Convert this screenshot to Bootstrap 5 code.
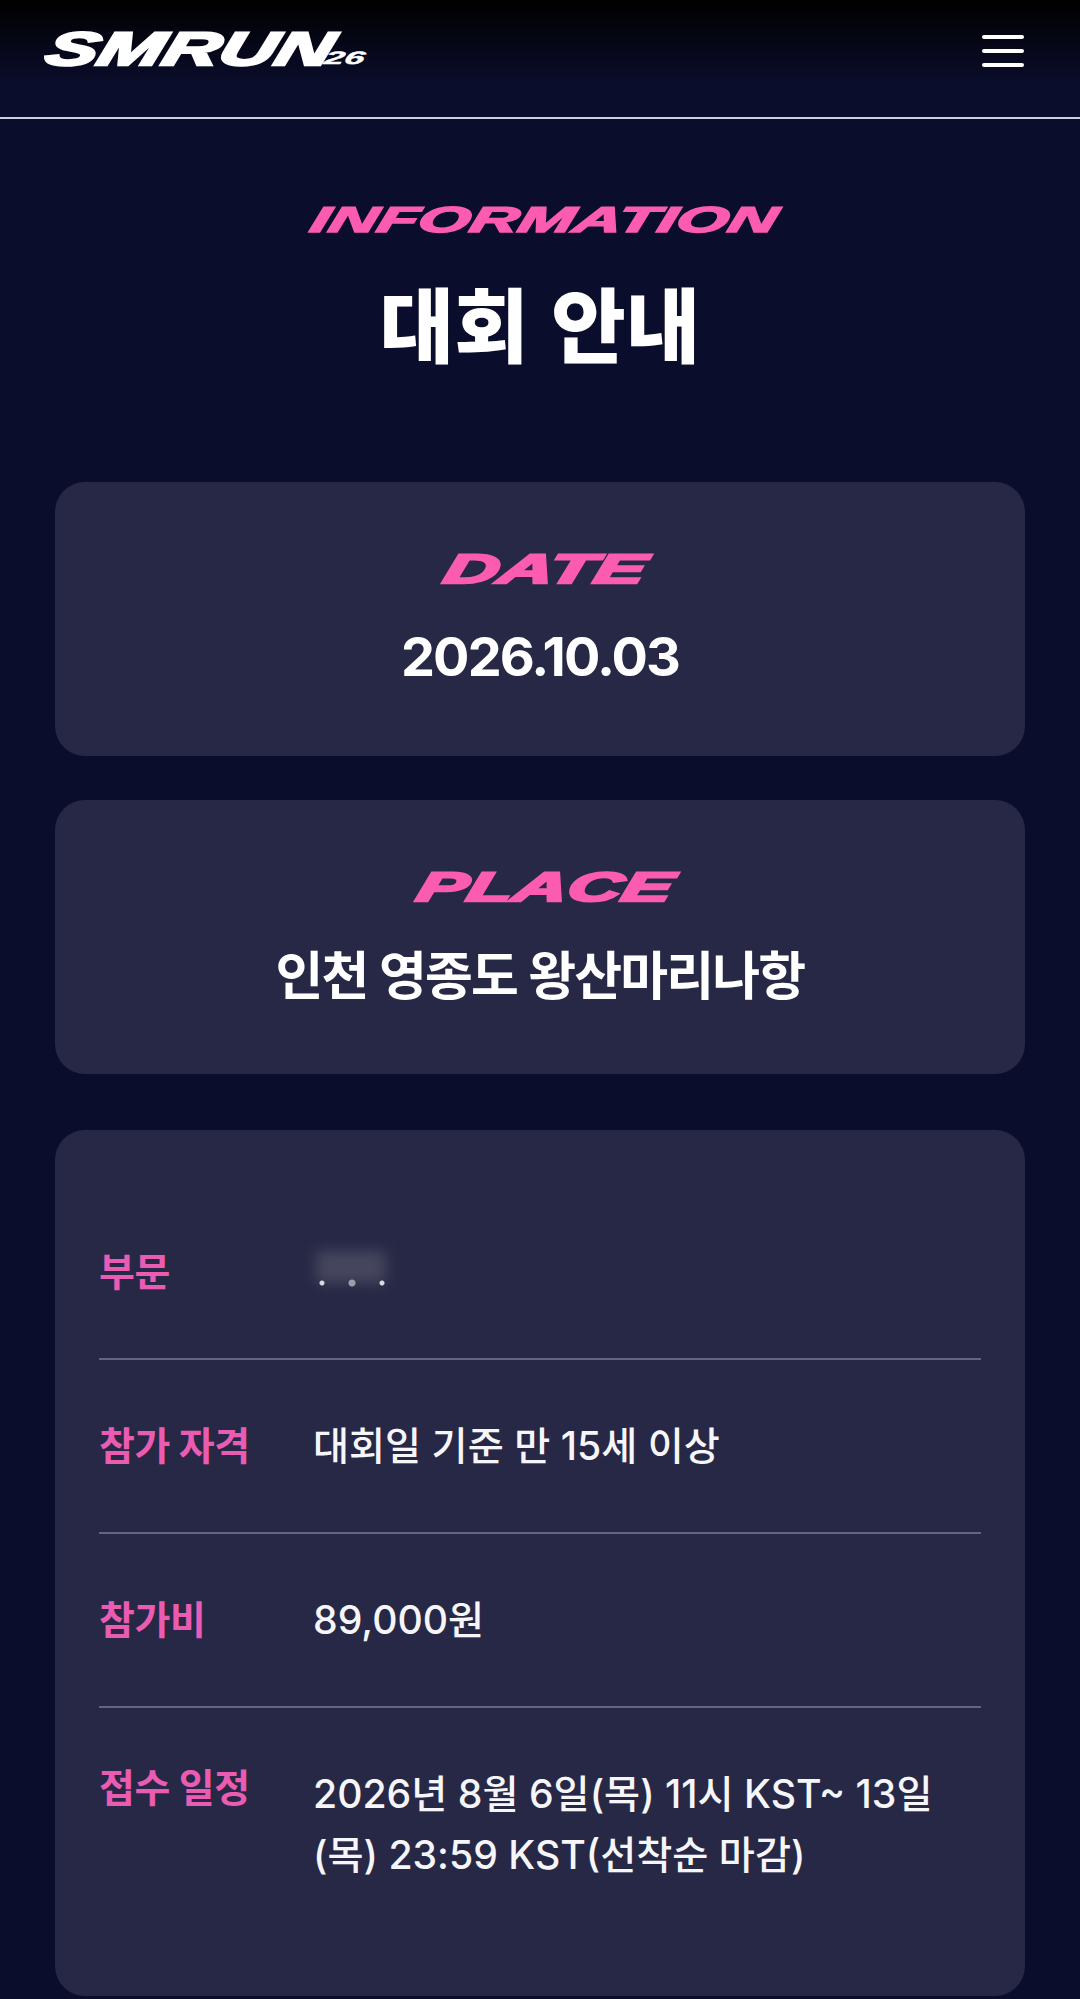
<!DOCTYPE html>
<html lang="ko">
<head>
    <meta charset="UTF-8">
    <title>대회 안내</title>
    <link href="https://cdn.jsdelivr.net/npm/bootstrap@5.3.3/dist/css/bootstrap.min.css" rel="stylesheet">
    <style>
        body { background: #0b0d2c; color: #fff; font-family: Inter, "Noto Sans CJK KR", sans-serif; }
        .site-head { height: 119px; padding: 0 56px 0 43px; background: linear-gradient(#000, #0b0d2c 85px); border-bottom: 2px solid #cfcfdc; align-items: flex-start; }
        .brand-mark { display: block; margin-top: 29px; overflow: visible; }
        .brand-mark text { font-family: "Liberation Sans", sans-serif; font-weight: 700; font-style: italic; fill: #fff; stroke: #fff; }
        .burger { width: 42px; margin-top: 35px; gap: 10px; }
        .burger span { display: block; height: 4px; border-radius: 2px; background: #fff; }
        .wordmark { display: block; overflow: visible; }
        .wordmark text { font-family: "Liberation Sans", sans-serif; font-weight: 700; font-style: italic; fill: #fb5cb0; stroke: #fb5cb0; }
        .intro { padding-top: 86px; }
        .intro-title { font-family: "Noto Sans CJK KR", sans-serif; font-size: 81px; font-weight: 900; line-height: 116px; margin: 31px 0 0; }
        .info-wrap { padding: 0 55px; margin-top: 103px; }
        .info-card { background: #262845; border: 0; border-radius: 30px; color: #fff; }
        .info-card + .info-card { margin-top: 44px; }
        .info-card.detail-card { margin-top: 56px; padding: 56px 44px 56px; }
        .brief-body { padding: 71px 0 64px; }
        .brief-value { font-size: 54px; font-weight: 700; line-height: 70px; letter-spacing: -0.035em; margin-top: 38px; }
        .brief-value.place-name { font-size: 52px; font-weight: 600; margin: 40px 0 -2px; }
        .detail-row { padding: 55px 0; border-bottom: 2px solid #63657f; }
        .detail-row:last-child { border-bottom: 0; }
        .detail-label { width: 215px; flex: none; color: #ea5cb2; font-size: 39px; font-weight: 700; line-height: 62px; letter-spacing: -0.01em; }
        .detail-label.raised { margin-top: -6px; }
        .detail-value { font-size: 39.2px; font-weight: 500; line-height: 61px; color: #f6f6fa; margin-left: -1px; }
        .smudge { position: relative; display: block; width: 74px; height: 36px; margin-top: 10px; }
        .smudge::before { content: ""; position: absolute; inset: 0 2px 4px; background: #46475e; filter: blur(7px); }
        .smudge::after { content: ""; position: absolute; left: 0; right: 0; bottom: 0; height: 8px; filter: blur(0.6px);
            background: radial-gradient(circle, #d8d8e0 2px, transparent 3px) 4px 0 / 8px 8px no-repeat,
                        radial-gradient(circle, #9c9cab 3px, transparent 4px) 32px 0 / 12px 8px no-repeat,
                        radial-gradient(circle, #d8d8e0 2px, transparent 3px) 64px 0 / 8px 8px no-repeat; }
    </style>
</head>
<body>
<header class="site-head d-flex justify-content-between">
    <svg class="brand-mark" width="322" height="36" viewBox="0 0 322 36">
        <text x="0" y="36" font-size="47" stroke-width="2.5" textLength="286" lengthAdjust="spacingAndGlyphs" transform="translate(10 0) skewX(-16)">SMRUN</text>
        <text x="280" y="35" font-size="18" stroke-width="0.4" textLength="40" lengthAdjust="spacingAndGlyphs" transform="translate(10 0) skewX(-16)">26</text>
    </svg>
    <div class="burger d-flex flex-column"><span></span><span></span><span></span></div>
</header>

<section class="intro d-flex flex-column align-items-center">
    <svg class="wordmark" width="473" height="27" viewBox="0 0 473 27">
        <text x="0" y="27" font-size="36" stroke-width="1.6" textLength="466" lengthAdjust="spacingAndGlyphs" transform="translate(11 0) skewX(-14)">INFORMATION</text>
    </svg>
    <h1 class="intro-title">대회 안내</h1>
</section>

<main class="info-wrap">
    <div class="card info-card">
        <div class="brief-body d-flex flex-column align-items-center">
            <svg class="wordmark" width="209" height="31" viewBox="0 0 209 31">
                <text x="0" y="30" font-size="41" stroke-width="2.4" textLength="201" lengthAdjust="spacingAndGlyphs" transform="translate(13 0) skewX(-14)">DATE</text>
            </svg>
            <div class="brief-value">2026.10.03</div>
        </div>
    </div>
    <div class="card info-card">
        <div class="brief-body d-flex flex-column align-items-center">
            <svg class="wordmark" width="263" height="31" viewBox="0 0 263 31">
                <text x="0" y="30" font-size="41" stroke-width="2.4" textLength="255" lengthAdjust="spacingAndGlyphs" transform="translate(13 0) skewX(-14)">PLACE</text>
            </svg>
            <div class="brief-value place-name">인천 영종도 왕산마리나항</div>
        </div>
    </div>
    <div class="card info-card detail-card">
        <div class="detail-row d-flex">
            <div class="detail-label">부문</div>
            <span class="smudge"></span>
        </div>
        <div class="detail-row d-flex">
            <div class="detail-label">참가 자격</div>
            <div class="detail-value">대회일 기준 만 15세 이상</div>
        </div>
        <div class="detail-row d-flex">
            <div class="detail-label">참가비</div>
            <div class="detail-value">89,000원</div>
        </div>
        <div class="detail-row d-flex">
            <div class="detail-label raised">접수 일정</div>
            <div class="detail-value">2026년 8월 6일(목) 11시 KST~ 13일(목) 23:59 KST(선착순 마감)</div>
        </div>
    </div>
</main>
<script src="https://cdn.jsdelivr.net/npm/bootstrap@5.3.3/dist/js/bootstrap.bundle.min.js"></script>
</body>
</html>
